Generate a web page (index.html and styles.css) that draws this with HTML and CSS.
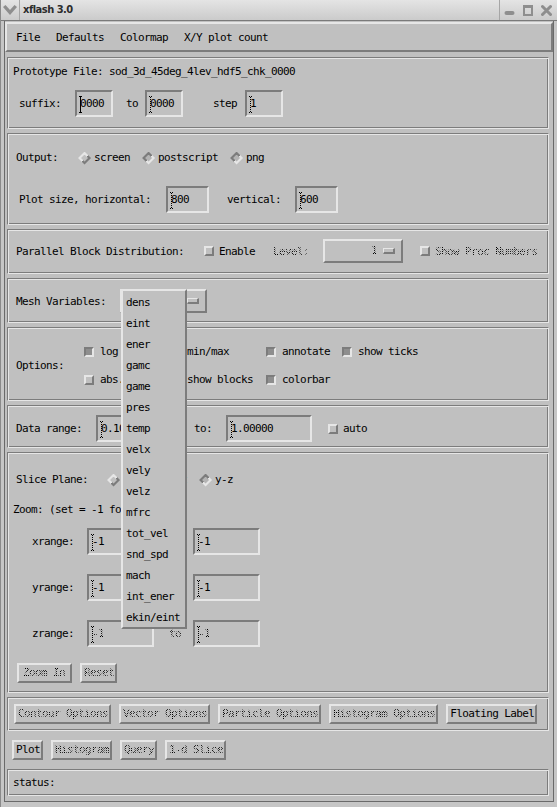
FILE: index.html
```html
<!DOCTYPE html>
<html>
<head>
<meta charset="utf-8">
<title>xflash 3.0</title>
<link rel="stylesheet" href="styles.css">
</head>
<body>
<div class="wm">
  <div class="titlebar">
    <div class="tb-left">
      <svg width="14" height="11" viewBox="0 0 14 11"><path d="M0 2 L2.5 0 L7 5 L11.5 0 L14 2 L7 10 Z" fill="#8e8e8e"/></svg>
    </div>
    <div class="tb-title">xflash 3.0</div>
    <div class="tb-right">
      <svg width="11" height="20" viewBox="0 0 11 20"><rect x="0.5" y="11" width="10" height="4" rx="2" fill="#8e8e8e"/></svg>
      <svg width="10" height="20" viewBox="0 0 10 20"><rect x="1" y="6" width="8" height="9" fill="none" stroke="#8e8e8e" stroke-width="2"/><rect x="0" y="5" width="10" height="3" fill="#8e8e8e"/></svg>
      <svg width="11" height="20" viewBox="0 0 11 20"><path d="M1.5 6.5 L9.5 14.5 M9.5 6.5 L1.5 14.5" stroke="#8e8e8e" stroke-width="3" stroke-linecap="round"/></svg>
    </div>
  </div>

  <div class="client">
    <div class="menubar">
      <span class="mi">File</span><span class="mi">Defaults</span><span class="mi">Colormap</span><span class="mi">X/Y plot count</span>
    </div>

    <div class="fr f-proto">
      <div class="line">Prototype File: sod_3d_45deg_4lev_hdf5_chk_0000</div>
      <div class="row r-suffix">
        <span>suffix:</span>
        <span class="fld w38 ml14"><span class="cur"></span>0000</span>
        <span class="ml13">to</span>
        <span class="fld w38 ml7"><span class="cur dot"></span>0000</span>
        <span class="ml30">step</span>
        <span class="fld w38 ml8"><span class="cur dot"></span>1</span>
      </div>
    </div>

    <div class="fr f-out">
      <div class="row line">
        <span>Output:</span>
        <span class="radios ml20">
          <span class="rb"><span class="dia on"></span>screen</span>
          <span class="rb"><span class="dia"></span>postscript</span>
          <span class="rb"><span class="dia"></span>png</span>
        </span>
      </div>
      <div class="row r-size">
        <span>Plot size, horizontal:</span>
        <span class="fld w42 ml15"><span class="cur dot"></span>800</span>
        <span class="ml18">vertical:</span>
        <span class="fld w43 ml14"><span class="cur dot"></span>600</span>
      </div>
    </div>

    <div class="fr f-par">
      <div class="row r-par">
        <span>Parallel Block Distribution:</span>
        <span class="cb ml20"></span><span class="ml5">Enable</span>
        <span class="ins ml18">Level:</span>
        <span class="opt w80 ml14"><span class="ins">1</span><span class="ind"></span></span>
        <span class="cb ml17"></span><span class="ins ml5">Show Proc Numbers</span>
      </div>
    </div>

    <div class="fr f-mesh">
      <div class="row r-par">
        <span>Mesh Variables:</span>
        <span class="opt w87 ml14 optl"><span class="optlab">dens</span><span class="ind"></span></span>
      </div>
    </div>

    <div class="fr f-opt">
      <div class="ogrid">
        <span class="olab">Options:</span>
        <span class="tg"><span class="cb on"></span>log</span>
        <span class="tg"><span class="cb on"></span>min/max</span>
        <span class="tg"><span class="cb on"></span>annotate</span>
        <span class="tg"><span class="cb on"></span>show ticks</span>
        <span class="tg"><span class="cb"></span>abs. value</span>
        <span class="tg"><span class="cb"></span>show blocks</span>
        <span class="tg"><span class="cb on"></span>colorbar</span>
      </div>
    </div>

    <div class="fr f-data">
      <div class="row">
        <span>Data range:</span>
        <span class="fld w86 ml14"><span class="cur dot"></span>0.10000</span>
        <span class="ml12">to:</span>
        <span class="fld w86 ml14"><span class="cur dot"></span>1.00000</span>
        <span class="cb ml16"></span><span class="ml5">auto</span>
      </div>
    </div>

    <div class="fr f-slice">
      <div class="row line r-slice">
        <span>Slice Plane:</span>
        <span class="radios ml19">
          <span class="rb"><span class="dia on"></span>x-y</span>
          <span class="rb"><span class="dia"></span>x-z</span>
          <span class="rb"><span class="dia"></span>y-z</span>
        </span>
      </div>
      <div class="line r-zoom">Zoom: (set = -1 for default)</div>
      <div class="row r-range r-first">
        <span class="rlab">xrange:</span>
        <span class="fld w67 ml13"><span class="cur dot"></span>-1</span>
        <span class="ml15">to</span>
        <span class="fld w67 ml12"><span class="cur dot"></span>-1</span>
      </div>
      <div class="row r-range">
        <span class="rlab">yrange:</span>
        <span class="fld w67 ml13"><span class="cur dot"></span>-1</span>
        <span class="ml15">to</span>
        <span class="fld w67 ml12"><span class="cur dot"></span>-1</span>
      </div>
      <div class="row r-range">
        <span class="rlab">zrange:</span>
        <span class="fld w67 ml13"><span class="cur dot"></span><span class="ins">-1</span></span>
        <span class="ins ml15">to</span>
        <span class="fld w67 ml12"><span class="cur dot"></span><span class="ins">-1</span></span>
      </div>
      <div class="row r-zbtn">
        <span class="btn ins-btn bz">Zoom In</span>
        <span class="btn ins-btn ml8">Reset</span>
      </div>
    </div>

    <div class="fr f-btns">
      <div class="row brow">
        <span class="btn ins-btn">Contour Options</span>
        <span class="btn ins-btn">Vector Options</span>
        <span class="btn ins-btn">Particle Options</span>
        <span class="btn ins-btn">Histogram Options</span>
        <span class="btn">Floating Label</span>
      </div>
    </div>

    <div class="row brow r-plot">
      <span class="btn">Plot</span>
      <span class="btn ins-btn">Histogram</span>
      <span class="btn ins-btn">Query</span>
      <span class="btn ins-btn">1-d Slice</span>
    </div>

    <div class="fr f-status">
      <div class="line st">status:</div>
    </div>
  </div>

  <div class="popup">
    <div class="pi">dens</div>
    <div class="pi">eint</div>
    <div class="pi">ener</div>
    <div class="pi">gamc</div>
    <div class="pi">game</div>
    <div class="pi">pres</div>
    <div class="pi">temp</div>
    <div class="pi">velx</div>
    <div class="pi">vely</div>
    <div class="pi">velz</div>
    <div class="pi">mfrc</div>
    <div class="pi">tot_vel</div>
    <div class="pi">snd_spd</div>
    <div class="pi">mach</div>
    <div class="pi">int_ener</div>
    <div class="pi">ekin/eint</div>
  </div>
</div>
</body>
</html>
```

FILE: styles.css
```css
:root {
  --bg: #c0c0c0;
  --lt: #e6e6e6;
  --dk: #7c7c7c;
}

html, body {
  margin: 0;
  padding: 0;
  background: var(--bg);
}

body {
  font-family: "DejaVu Sans Mono", "Liberation Mono", monospace;
  font-size: 11px;
  letter-spacing: -0.62px;
  line-height: 14px;
  color: #000;
  overflow: hidden;
}

.wm {
  position: relative;
  width: 557px;
  height: 807px;
  box-sizing: border-box;
  background: #c6c6c6;
  border-left: 1px solid #8a8a8a;
  overflow: hidden;
}

/* ---- title bar ---- */
.titlebar {
  height: 20px;
  border-bottom: 1px solid #7a7a7a;
  background: linear-gradient(#e4e4e4, #cbcbcb);
  display: flex;
  align-items: center;
}
.tb-left {
  width: 19px;
  height: 20px;
  box-sizing: border-box;
  border-right: 1px solid #a6a6a6;
  display: flex;
  align-items: center;
  justify-content: center;
}
.tb-title {
  flex: 1;
  margin-left: 3px;
  font-family: "DejaVu Sans Condensed", "DejaVu Sans", sans-serif;
  font-weight: bold;
  font-size: 11px;
  letter-spacing: -0.5px;
  color: #2c2c2c;
}
.tb-right {
  height: 20px;
  width: 58px;
  box-sizing: border-box;
  border-left: 1px solid #a6a6a6;
  display: flex;
  align-items: flex-start;
  padding-left: 4px;
  gap: 8px;
}

/* ---- client ---- */
.client {
  margin-left: 3px;
  width: 550px;
  height: 781px;
  box-sizing: border-box;
  background: var(--bg);
  border-left: 1px solid #6a6a6a;
  border-right: 1px solid #6a6a6a;
  border-bottom: 1px solid #6a6a6a;
  padding-top: 1px;
}

.menubar {
  height: 30px;
  box-sizing: border-box;
  border: 2px solid;
  border-color: var(--lt) var(--dk) var(--dk) var(--lt);
  display: flex;
  line-height: 27px;
  padding-left: 1px;
}
.mi {
  padding: 0 8px;
}

/* etched frame */
.fr {
  box-sizing: border-box;
  margin: 4px 4px 0 2px;
  border: 1px solid;
  border-color: var(--dk) var(--lt) var(--lt) var(--dk);
  box-shadow: inset 1px 1px 0 var(--lt), inset -1px -1px 0 var(--dk);
  padding: 1px;
}
.f-proto {
  margin-top: 5px;
}

.line {
  height: 14px;
  line-height: 14px;
  white-space: nowrap;
}

.row {
  display: flex;
  align-items: center;
  white-space: nowrap;
}

/* margins */
.ml5 { margin-left: 5px; }
.ml7 { margin-left: 7px; }
.ml8 { margin-left: 8px; }
.ml12 { margin-left: 12px; }
.ml13 { margin-left: 13px; }
.ml14 { margin-left: 14px; }
.ml15 { margin-left: 15px; }
.ml16 { margin-left: 16px; }
.ml17 { margin-left: 17px; }
.ml18 { margin-left: 18px; }
.ml19 { margin-left: 19px; }
.ml20 { margin-left: 20px; }
.ml30 { margin-left: 30px; }

/* text fields */
.fld {
  position: relative;
  display: inline-block;
  box-sizing: border-box;
  height: 27px;
  border: 2px solid;
  border-color: var(--dk) var(--lt) var(--lt) var(--dk);
  padding-left: 3px;
  line-height: 24px;
  overflow: hidden;
}
.w38 { width: 38px; }
.w42 { width: 43px; }
.w43 { width: 43px; }
.w67 { width: 67px; }
.w80 { width: 80px; }
.w86 { width: 86px; }
.w87 { width: 87px; }

.cur {
  position: absolute;
  left: 2px;
  top: 4px;
  width: 3px;
  height: 17px;
  background:
    linear-gradient(#000, #000) 1px 0 / 1px 100% no-repeat,
    linear-gradient(#000, #000) 0 0 / 3px 1px no-repeat,
    linear-gradient(#000, #000) 0 100% / 3px 1px no-repeat;
}
.cur.dot {
  background:
    repeating-linear-gradient(#000 0 1px, transparent 1px 2px) 1px 1px / 1px calc(100% - 2px) no-repeat,
    linear-gradient(90deg, #000 0 1px, transparent 1px 2px, #000 2px 3px) 0 0 / 3px 1px no-repeat,
    linear-gradient(90deg, #000 0 1px, transparent 1px 2px, #000 2px 3px) 0 100% / 3px 1px no-repeat;
}

/* insensitive, stippled text */
.ins {
  color: transparent;
  background-image: repeating-conic-gradient(#000 0 25%, transparent 0 50%);
  background-size: 2px 2px;
  -webkit-background-clip: text;
  background-clip: text;
}

/* section 1 */
.f-proto {
  height: 72px;
  padding-top: 7px;
  padding-left: 5px;
}
.r-suffix {
  margin-top: 11px;
  padding-left: 6px;
}

/* section 2 */
.f-out {
  height: 92px;
  padding-top: 17px;
  padding-left: 8px;
}
.radios {
  display: flex;
  gap: 12px;
}
.rb {
  display: flex;
  align-items: center;
}
.dia {
  display: inline-block;
  width: 13px;
  height: 13px;
  margin-right: 3px;
  position: relative;
}
.dia::before {
  content: "";
  position: absolute;
  inset: 0;
  background: conic-gradient(from -45deg, var(--dk) 0 25%, var(--lt) 25% 50%, var(--lt) 50% 75%, var(--dk) 75% 100%);
  clip-path: polygon(50% 0, 100% 50%, 50% 100%, 0 50%);
}
.dia::after {
  content: "";
  position: absolute;
  inset: 3px;
  background: #b4b4b4;
  clip-path: polygon(50% 0, 100% 50%, 50% 100%, 0 50%);
}
.dia.on::before {
  background: conic-gradient(from -45deg, var(--lt) 0 25%, var(--dk) 25% 50%, var(--dk) 50% 75%, var(--lt) 75% 100%);
}
.dia.on::after {
  background: var(--bg);
}
.r-size {
  margin-top: 21px;
  padding-left: 3px;
}

/* section 3/4 */
.f-par, .f-mesh {
  height: 45px;
  padding-left: 8px;
}
.f-par { padding-top: 9px; }
.f-mesh { padding-top: 10px; }
.r-par {
  height: 24px;
}
.r-par > span:not(.opt):not(.cb) {
  padding-top: 2px;
}

.cb {
  display: inline-block;
  width: 10px;
  height: 10px;
  box-sizing: border-box;
  border: 2px solid;
  border-color: var(--lt) var(--dk) var(--dk) var(--lt);
  background: var(--bg);
}
.cb.on {
  border-color: var(--dk) var(--lt) var(--lt) var(--dk);
  background: #8e8e8e;
}

.opt {
  display: inline-flex;
  align-items: center;
  justify-content: flex-end;
  box-sizing: border-box;
  height: 24px;
  border: 2px solid;
  border-color: var(--lt) var(--dk) var(--dk) var(--lt);
  padding-right: 6px;
}
.opt.optl {
  padding-left: 4px;
  padding-right: 6px;
}
.optlab {
  flex: 1;
}
.ind {
  display: inline-block;
  width: 12px;
  height: 6px;
  box-sizing: border-box;
  border: 1px solid;
  border-color: var(--lt) var(--dk) var(--dk) var(--lt);
  border-right-width: 2px;
  border-bottom-width: 2px;
  margin-left: 6px;
}

/* section 5 */
.f-opt {
  height: 74px;
  padding-top: 17px;
  padding-left: 8px;
}
.ogrid {
  display: grid;
  grid-template-columns: 68px 87px 95px 76px auto;
  grid-template-rows: 14px 14px;
  row-gap: 14px;
  white-space: nowrap;
}
.olab {
  grid-row: 1 / 3;
  align-self: center;
}
.tg {
  display: flex;
  align-items: center;
}
.tg .cb {
  margin-right: 6px;
}

/* section 6 */
.f-data {
  height: 43px;
  padding-top: 9px;
  padding-left: 8px;
}

/* section 7 */
.f-slice {
  height: 241px;
  padding-top: 20px;
}
.r-slice {
  padding-left: 7px;
}
.r-zoom {
  margin-top: 16px;
  padding-left: 4px;
}
.r-range {
  margin-top: 19px;
  padding-left: 23px;
}
.r-range.r-first {
  margin-top: 11px;
}
.rlab {
  width: 42px;
}
.r-zbtn {
  margin-top: 16px;
  padding-left: 8px;
}

.btn {
  display: inline-block;
  box-sizing: border-box;
  height: 20px;
  border: 2px solid;
  border-color: var(--lt) var(--dk) var(--dk) var(--lt);
  padding: 0 1px 0 2px;
  line-height: 16px;
  white-space: nowrap;
}
.ins-btn {
  color: transparent;
  background-image: repeating-conic-gradient(#000 0 25%, transparent 0 50%);
  background-size: 2px 2px;
  -webkit-background-clip: text;
  background-clip: text;
}
.bz {
  width: 55px;
  padding-left: 4px;
}

/* section 8 */
.f-btns {
  height: 34px;
  padding-top: 6px;
  padding-left: 6px;
}
.brow {
  gap: 8px;
}
.r-plot {
  margin-top: 9px;
  padding-left: 7px;
}

/* status */
.f-status {
  margin-top: 9px;
  height: 27px;
  padding-left: 5px;
}
.st {
  height: 24px;
  line-height: 24px;
}

/* popup menu overlay */
.popup {
  position: absolute;
  left: 120px;
  top: 289px;
  width: 66px;
  height: 340px;
  box-sizing: border-box;
  border: 2px solid;
  border-color: var(--lt) var(--dk) var(--dk) var(--lt);
  background: var(--bg);
  padding-left: 3px;
  padding-top: 1px;
}
.pi {
  height: 21px;
  line-height: 21px;
  white-space: nowrap;
}
```
